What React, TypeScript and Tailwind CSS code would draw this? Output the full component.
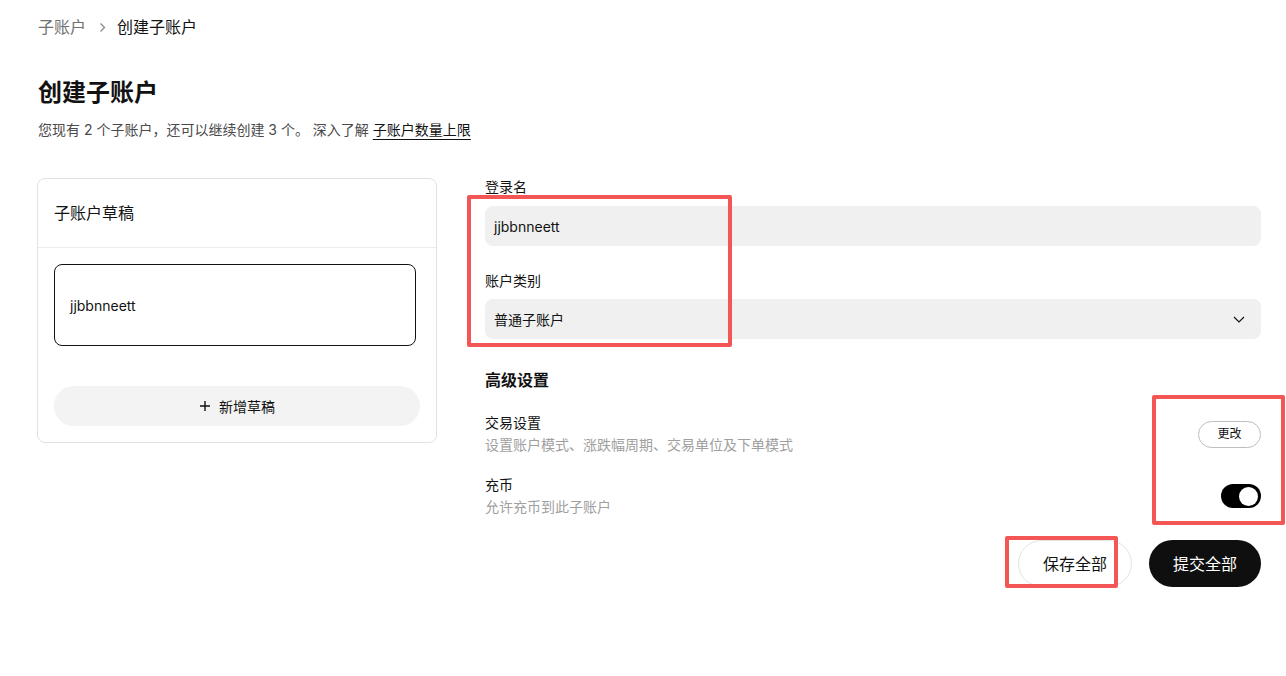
import React from "react";

const font = { fontFamily: 'Inter, "Noto Sans CJK SC", sans-serif' };

export default function App() {
  return (
    <div className="relative w-[1286px] h-[676px] bg-white text-[#121212] overflow-hidden" style={font}>
      <div className="pl-[38px] pt-[17px]">
        {/* breadcrumb */}
        <div className="flex items-center h-[20px] text-[16px] leading-[20px]">
          <span className="text-[#707070]">子账户</span>
          <svg className="ml-[13px] mr-[11px]" width="7" height="11" viewBox="0 0 7 11" fill="none">
            <path d="M1.5 1.5 L5.5 5.5 L1.5 9.5" stroke="#8a8a8a" strokeWidth="1.3" />
          </svg>
          <span className="text-[#121212]">创建子账户</span>
        </div>
        {/* title */}
        <h1 className="mt-[40px] text-[24px] leading-[32px] font-bold">创建子账户</h1>
        <p className="mt-[11px] text-[14px] leading-[20px] text-[#4a4a4a]">
          您现有 2 个子账户，还可以继续创建 3 个。 深入了解{" "}
          <span className="text-[#121212] underline underline-offset-[4px]">子账户数量上限</span>
        </p>

        <div className="mt-[38px] flex gap-[48px]">
          {/* left card */}
          <div className="-ml-[1px] w-[400px] h-[265px] border border-[#e2e2e2] rounded-[8px] flex flex-col">
            <div className="h-[69px] flex items-center px-[16px] border-b border-[#ececec] text-[16px]">子账户草稿</div>
            <div className="pl-[16px] pt-[16px]">
              <div className="w-[362px] h-[82px] border border-[#121212] rounded-[8px] flex items-center px-[15px] text-[14px]">
                jjbbnneett
              </div>
              <button className="mt-[40px] w-[366px] h-[40px] rounded-full bg-[#f3f3f3] flex items-center justify-center gap-[8px] text-[14px]">
                <svg width="12" height="12" viewBox="0 0 12 12" fill="none">
                  <path d="M6 1 V11 M1 6 H11" stroke="#121212" strokeWidth="1.4" />
                </svg>
                新增草稿
              </button>
            </div>
          </div>

          {/* right column */}
          <div className="w-[776px] -mt-[1px]">
            <div className="text-[14px] leading-[20px]">登录名</div>
            <div className="mt-[9px] h-[40px] rounded-[8px] bg-[#f0f0f0] flex items-center px-[9px] text-[14px]">jjbbnneett</div>
            <div className="mt-[25px] text-[14px] leading-[20px]">账户类别</div>
            <div className="mt-[8px] h-[40px] rounded-[8px] bg-[#f0f0f0] flex items-center justify-between pl-[9px] pr-[16px] text-[14px]">
              <span>普通子账户</span>
              <svg width="12" height="7" viewBox="0 0 12 7" fill="none">
                <path d="M1 1 L6 6 L11 1" stroke="#121212" strokeWidth="1.2" />
              </svg>
            </div>
            <div className="mt-[29px] text-[16px] leading-[24px] font-bold">高级设置</div>

            <div className="mt-[21px] flex items-center justify-between">
              <div>
                <div className="text-[14px] leading-[20px]">交易设置</div>
                <div className="mt-[2px] text-[14px] leading-[20px] text-[#a0a0a0]">设置账户模式、涨跌幅周期、交易单位及下单模式</div>
              </div>
              <button className="w-[63px] h-[27px] rounded-full border border-[#bdbdbd] text-[12px] flex items-center justify-center">更改</button>
            </div>

            <div className="mt-[20px] flex items-center justify-between">
              <div>
                <div className="text-[14px] leading-[20px]">充币</div>
                <div className="mt-[2px] text-[14px] leading-[20px] text-[#a0a0a0]">允许充币到此子账户</div>
              </div>
              <div className="w-[40px] h-[24px] rounded-full bg-[#000] flex items-center justify-end pr-[3px]">
                <div className="w-[19px] h-[19px] rounded-full bg-white" />
              </div>
            </div>

            <div className="mt-[23px] flex justify-end gap-[17px]">
              <button className="w-[114px] h-[47px] rounded-full border border-[#e3e3e3] text-[16px] bg-white">保存全部</button>
              <button className="w-[112px] h-[47px] rounded-full bg-[#0f0f0f] text-white text-[16px]">提交全部</button>
            </div>
          </div>
        </div>
      </div>

      {/* annotation boxes */}
      <div className="absolute left-[467px] top-[195px] w-[265px] h-[152px] border-[4px] border-[#f45555] rounded-[2px] pointer-events-none" />
      <div className="absolute left-[1152px] top-[395px] w-[133px] h-[130px] border-[4px] border-[#f45555] rounded-[2px] pointer-events-none" />
      <div className="absolute left-[1005px] top-[536px] w-[113px] h-[52px] border-[4px] border-[#f45555] rounded-[2px] pointer-events-none" />
    </div>
  );
}
